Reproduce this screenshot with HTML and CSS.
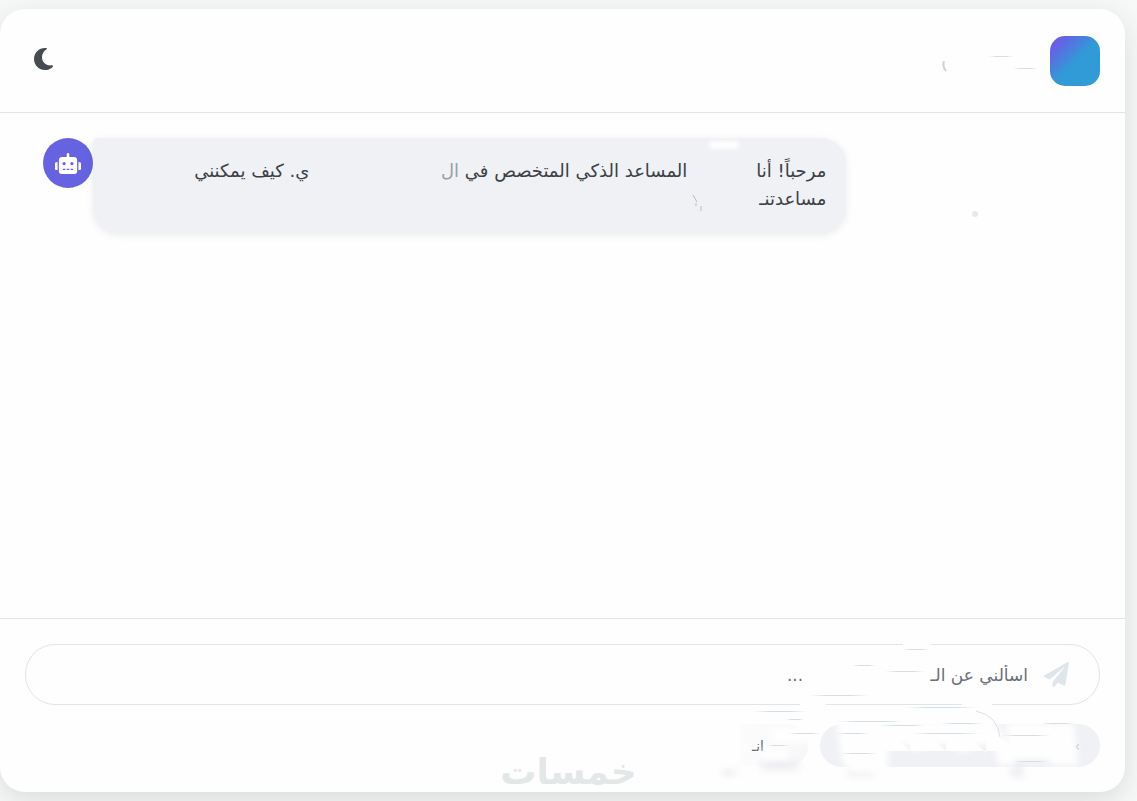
FILE: index.html
```html
<!DOCTYPE html>
<html lang="ar" dir="rtl">
<head>
    <meta charset="UTF-8">
    <meta name="viewport" content="width=device-width, initial-scale=1.0">
    <title>المساعد الذكي</title>
    <link rel="stylesheet" href="styles.css">
</head>
<body>

    <div class="chat-container">
        <!-- Header -->
        <header class="chat-header">
            <div class="brand">
                <div class="logo"></div>
                <svg class="brand-marks" width="110" height="30" viewBox="0 0 110 30" aria-hidden="true">
                    <defs>
                        <linearGradient id="fade">
                            <stop offset="0" stop-color="#dfe6e9" stop-opacity="0"/>
                            <stop offset="0.3" stop-color="#d5dfe3"/>
                            <stop offset="0.7" stop-color="#d5dfe3"/>
                            <stop offset="1" stop-color="#dfe6e9" stop-opacity="0"/>
                        </linearGradient>
                    </defs>
                    <path d="M12 15q-2 5 2 10" fill="none" stroke="#d2d2d8" stroke-width="2"/>
                    <rect x="56" y="10" width="26" height="1" fill="url(#fade)"/>
                    <rect x="80" y="22" width="26" height="1" fill="url(#fade)"/>
                </svg>
            </div>
            <button class="theme-toggle" type="button" aria-label="الوضع الداكن">
                <svg width="20" height="22" viewBox="0 0 20 22" aria-hidden="true">
                    <path d="M11 0C4.900 0 0 4.900 0 11s4.900 11 11 11c3 0 5.700-1.200 7.700-3.100.7-.8.2-1.800-.9-1.600C12.500 18.200 8 14.500 8 9.300 8 6 9.800 3.100 12.300 1.600c.9-.5.7-1.400-.2-1.500L11 0z" fill="#454b50"/>
                </svg>
            </button>
        </header>

        <!-- Messages -->
        <main class="chat-messages">
            <div class="message">
                <div class="bubble">
                    <p class="line"><span class="part part-hello">مرحباً! أنا</span><span class="part part-role">المساعد الذكي المتخصص في <span class="cut">ال</span></span><span class="part">ي. كيف يمكنني</span></p>
                    <p class="line"><span class="part">مساعدتنـ</span></p>
                    <span class="glare"></span>
                    <svg class="bubble-marks" width="12" height="20" viewBox="0 0 12 20" aria-hidden="true">
                        <path d="M2 2l4 7M5 10v3M10 13v5" fill="none" stroke="#b9bbc5" stroke-width="1"/>
                    </svg>
                </div>
                <div class="avatar">
                    <svg width="26" height="21" viewBox="0 0 640 512" aria-hidden="true">
                        <path d="M32 224h32v192H32a32 32 0 0 1-32-32V256a32 32 0 0 1 32-32zm512-48v272a64 64 0 0 1-64 64H160a64 64 0 0 1-64-64V176a80 80 0 0 1 80-80h112V32a32 32 0 0 1 64 0v64h112a80 80 0 0 1 80 80zM264 256a40 40 0 1 0-80 0 40 40 0 0 0 80 0zm-8 128h-64v32h64zm96 0h-64v32h64zm104-128a40 40 0 1 0-80 0 40 40 0 0 0 80 0zm-8 128h-64v32h64zm192-128v128a32 32 0 0 1-32 32h-32V224h32a32 32 0 0 1 32 32z" fill="#fff"/>
                    </svg>
                </div>
            </div>
            <span class="dot"></span>
        </main>

        <!-- Input area -->
        <footer class="chat-footer">
            <form class="input-box">
                <button class="send" type="button" aria-label="إرسال">
                    <svg width="25" height="25" viewBox="0 0 512 512" aria-hidden="true">
                        <path d="M476 3L12 271c-18 10-16 35 2 43l106 44L408 106c6-5 13 3 8 8L174 408v80c0 24 28 33 42 16l64-77 125 52c14 6 30-3 33-18l72-432c3-20-17-35-34-26z" fill="#dfe6e9"/>
                    </svg>
                </button>
                <input type="text" aria-label="الرسالة" placeholder="اسألني عن الـ&emsp;&emsp;&emsp;&emsp;&emsp;&emsp;&emsp;&ensp;...">
            </form>
            <div class="suggestions">
                <button class="chip chip-main" type="button">›</button>
                <button class="chip chip-faded" type="button">انـ</button>
            </div>

            <svg class="wash" width="425" height="174" viewBox="0 0 425 174" aria-hidden="true">
                <defs>
                    <filter id="soft" x="-20%" y="-20%" width="140%" height="140%">
                        <feGaussianBlur stdDeviation="3"/>
                    </filter>
                    <filter id="smudge" x="-50%" y="-50%" width="200%" height="200%">
                        <feGaussianBlur stdDeviation="4"/>
                    </filter>
                </defs>
                <g fill="#e7e8ee" filter="url(#smudge)">
                    <path d="M22 147h14v8H22zM62 143h36v7H62zM148 149h26v7h-26zM312 146h10v12h-10z"/>
                </g>
                <g fill="#fefefe" filter="url(#soft)">
                    <path d="M-10 100h48v50H-10zM72 108h46v16H72zM62 130h26v10H62z"/>
                    <path d="M136 102h160l12 24h8v20h-18l-4-20h-20l-10 8-14-8h-22l-10 6-12-6h-18v28h-36l-10-12z"/>
                    <path d="M306 104h68l4 42h-24l-8-6h-28l-10-18z"/>
                </g>
                <path d="M180 122h20l10 10V122h26l10 10V122h28l12 12V122h20v10H180z" fill="#fefefe"/>
                <path d="M203 24h28v4h-28zM262 84h30v6h-30zM100 84h26v6h-26z" fill="#fefefe"/>
                <g fill="url(#fade)">
                    <rect x="202" y="30" width="28" height="1"/>
                    <rect x="152" y="46" width="24" height="1"/>
                    <rect x="184" y="52" width="42" height="1"/>
                    <rect x="108" y="76" width="62" height="1"/>
                    <rect x="204" y="88" width="76" height="1"/>
                    <rect x="52" y="92" width="56" height="1"/>
                    <rect x="86" y="100" width="18" height="1"/>
                    <rect x="136" y="102" width="70" height="1"/>
                    <rect x="180" y="106" width="46" height="1"/>
                    <rect x="240" y="104" width="44" height="1"/>
                    <rect x="88" y="114" width="34" height="1"/>
                    <rect x="136" y="114" width="34" height="1"/>
                    <rect x="210" y="114" width="72" height="1"/>
                    <rect x="66" y="126" width="24" height="1"/>
                    <rect x="140" y="134" width="38" height="1"/>
                    <rect x="300" y="116" width="52" height="1"/>
                    <rect x="312" y="142" width="38" height="1"/>
                    <rect x="340" y="104" width="36" height="1"/>
                </g>
                <path d="M276 92q22 5 24 26" fill="none" stroke="#dde0e3"/>
            </svg>
            <span class="watermark">خمسات</span>
        </footer>
    </div>

</body>
</html>
```
FILE: styles.css
```css
* {
    box-sizing: border-box;
}
body {
    font-family: "DejaVu Sans", sans-serif;
    margin: 0;
    padding: 9px 12px 9px 0;
    height: 100vh;
    background-color: #f7f9f9;
    color: #3b4045;
    overflow: hidden;
}
button, input {
    font-family: inherit;
    border: none;
    background: none;
    padding: 0;
}
button {
    cursor: pointer;
}
.chat-container {
    display: flex;
    flex-direction: column;
    height: 100%;
    background-color: #fefefe;
    border-radius: 25px;
    box-shadow: 0 8px 30px rgba(0, 0, 0, 0.12);
}

/* Header */
.chat-header {
    display: flex;
    justify-content: space-between;
    align-items: center;
    padding: 27px 25px 26px 34px;
    border-bottom: 1px solid #dfe6e9;
}
.brand {
    display: flex;
    align-items: center;
    gap: 8px;
}
.logo {
    width: 50px;
    height: 50px;
    border-radius: 15px;
    background: linear-gradient(135deg, #6c5ce7 12%, #309bd7 52%);
}
.theme-toggle {
    display: flex;
    padding-bottom: 4px;
}

/* Messages */
.chat-messages {
    position: relative;
    flex: 1;
    padding: 25px 25px 25px 43px;
}
.message {
    display: flex;
    align-items: flex-start;
    width: 76%;
    margin-right: auto;
}
.bubble {
    position: relative;
    flex: 1;
    padding: 19px 20px 20px;
    background-color: #f0f1f5;
    border-radius: 25px;
    border-top-left-radius: 5px;
    box-shadow: 0 2px 8px rgba(0, 0, 0, 0.08);
}
.line {
    margin: 0;
    font-size: 18px;
    line-height: 28px;
    white-space: nowrap;
}
.part {
    display: inline-block;
}
.part-hello {
    width: 139px;
}
.part-role {
    width: 378px;
}
.cut {
    color: #9a9ea8;
}
.glare {
    position: absolute;
    top: 3px;
    right: 107px;
    width: 30px;
    height: 8px;
    border-radius: 4px;
    background-color: #fefefe;
    filter: blur(2px);
}
.bubble-marks {
    position: absolute;
    right: 143px;
    bottom: 20px;
}
.avatar {
    display: flex;
    align-items: center;
    justify-content: center;
    width: 50px;
    height: 50px;
    border-radius: 50%;
    background-color: #6663e3;
}
.dot {
    position: absolute;
    top: 98px;
    right: 147px;
    width: 6px;
    height: 6px;
    border-radius: 50%;
    background-color: #e8e8e9;
}

/* Input area */
.chat-footer {
    position: relative;
    padding: 25px;
    border-top: 1px solid #dfe6e9;
}
.input-box {
    display: flex;
    align-items: center;
    gap: 16px;
    height: 61px;
    padding: 0 30px;
    border: 1px solid #dfe6e9;
    border-radius: 30px;
}
.send {
    display: flex;
}
.input-box input {
    flex: 1;
    font-size: 17px;
    outline: none;
}
.input-box input::placeholder {
    color: #6b6f78;
    opacity: 1;
}
.suggestions {
    display: flex;
    gap: 12px;
    margin-top: 19px;
}
.chip {
    height: 43px;
    padding: 0 20px;
    border-radius: 22px;
    background-color: #f0f1f5;
    color: #636e72;
    font-size: 14px;
    text-align: right;
}
.chip-main {
    width: 280px;
    color: #b2b6bd;
}
.chip-faded {
    width: 84px;
    padding: 0 44px;
    background: linear-gradient(to left, #f7f7fa, #fefefe);
}
.wash {
    position: absolute;
    top: 0;
    right: 0;
    pointer-events: none;
}
/* centred on the window, the card stops 12px short of its right side */
.watermark {
    position: absolute;
    left: calc(50% + 6px);
    bottom: 0;
    transform: translateX(-50%);
    font-size: 36px;
    font-weight: bold;
    line-height: 40px;
    color: #e4e7e8;
}
```
